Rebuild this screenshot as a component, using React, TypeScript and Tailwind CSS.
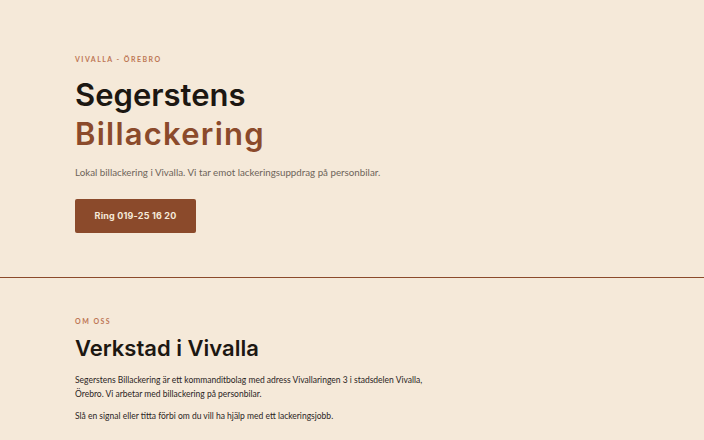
const heading = { fontFamily: "Inter, 'Noto Sans', sans-serif" };
const body = { fontFamily: "Lato, 'Open Sans', sans-serif" };

export default function App() {
  return (
    <div className="min-h-[440px] w-full bg-[#f5e9d9]" style={body}>
      <section className="px-[75px] pt-[54px] pb-[44px]">
        <p className="text-[7px] font-bold uppercase tracking-[0.21em] text-[#bd7654]">
          Vivalla - Örebro
        </p>
        <h1
          className="mt-[10px] text-[31px] font-semibold leading-[39px] text-[#1c1712]"
          style={heading}
        >
          Segerstens
          <br />
          <span className="tracking-[0.04em] text-[#8b4a2b]">Billackering</span>
        </h1>
        <p className="mt-[12px] text-[9.75px] leading-[14px] text-[#6e6459]">
          Lokal billackering i Vivalla. Vi tar emot lackeringsuppdrag på personbilar.
        </p>
        <button
          className="mt-[20px] flex h-[34px] w-[121px] items-center justify-center rounded-[2px] bg-[#8b4a2b] text-[9px] font-bold tracking-[0.02em] text-[#f5e9d9]"
          style={heading}
        >
          Ring 019-25 16 20
        </button>
      </section>
      <div className="h-px w-full bg-[#8b4a2b]" />
      <section className="px-[75px] pt-[38px]">
        <p className="text-[7px] font-bold uppercase tracking-[0.21em] text-[#bd7654]">
          Om oss
        </p>
        <h2
          className="mt-[8px] text-[22px] font-semibold leading-[28px] text-[#1c1712]"
          style={heading}
        >
          Verkstad i Vivalla
        </h2>
        <div className="mt-[11px] max-w-[352px] space-y-[8px] text-[8.5px] leading-[14px] text-[#2a241e]">
          <p>
            Segerstens Billackering är ett kommanditbolag med adress Vivallaringen 3 i
            stadsdelen Vivalla, Örebro. Vi arbetar med billackering på personbilar.
          </p>
          <p>Slå en signal eller titta förbi om du vill ha hjälp med ett lackeringsjobb.</p>
        </div>
      </section>
    </div>
  );
}
